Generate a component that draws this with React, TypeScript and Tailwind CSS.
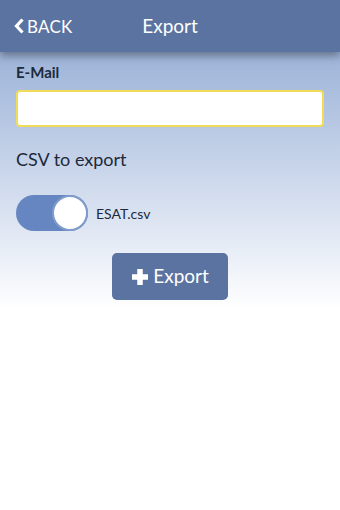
import React, { useState } from 'react';

export default function App() {
  const [email, setEmail] = useState('');
  const [enabled, setEnabled] = useState(true);

  return (
    <div
      className="w-[340px] h-[510px] bg-white flex flex-col"
      style={{ fontFamily: 'Lato, "Open Sans", sans-serif' }}
    >
      {/* Header */}
      <div className="h-[52px] bg-[#5b73a1] flex items-center relative z-10 shadow-[0_4px_8px_rgba(0,0,0,0.35)]">
        <button className="flex items-center gap-[2px] pl-[13px] text-white text-[17px] leading-none">
          <svg width="12" height="16" viewBox="0 0 12 16">
            <path d="M9.5 1.5 L3.5 8 L9.5 14.5" fill="none" stroke="white" strokeWidth="3.2" />
          </svg>
          <span className="tracking-[0.2px]">BACK</span>
        </button>
        <div className="absolute left-0 right-0 text-center text-white text-[19px] pointer-events-none">Export</div>
      </div>

      {/* Content */}
      <div className="h-[258px] bg-gradient-to-b from-[#9db3d8] to-white flex flex-col px-4 pt-[10px]">
        <label className="text-[15px] font-bold text-[#1c2a3b] leading-5">E-Mail</label>
        <input
          value={email}
          onChange={(e) => setEmail(e.target.value)}
          className="mt-[8px] h-[37px] bg-white border-2 border-[#f1dc5a] rounded-[4px] px-2 outline-none"
        />
        <div className="mt-[20px] text-[18px] text-[#1c2a3b] leading-6">CSV to export</div>
        <div className="mt-[24px] flex items-center gap-2">
          <button
            onClick={() => setEnabled(!enabled)}
            className="w-[72px] h-[36px] rounded-full bg-[#6686c1] relative"
          >
            <span className="absolute right-0 top-0 w-[36px] h-[36px] rounded-full bg-white border-2 border-[#7f9ccc]" />
          </button>
          <span className="text-[14px] text-[#1c2a3b]">ESAT.csv</span>
        </div>
        <div className="mt-[22px] flex justify-center">
          <button className="w-[116px] h-[47px] bg-[#5b73a1] rounded-[5px] text-white text-[19px] flex items-center justify-center gap-[4px]">
            <svg width="18" height="18" viewBox="0 0 18 18">
              <path d="M9 1 V17 M1 9 H17" stroke="white" strokeWidth="5.5" />
            </svg>
            <span>Export</span>
          </button>
        </div>
      </div>
    </div>
  );
}
